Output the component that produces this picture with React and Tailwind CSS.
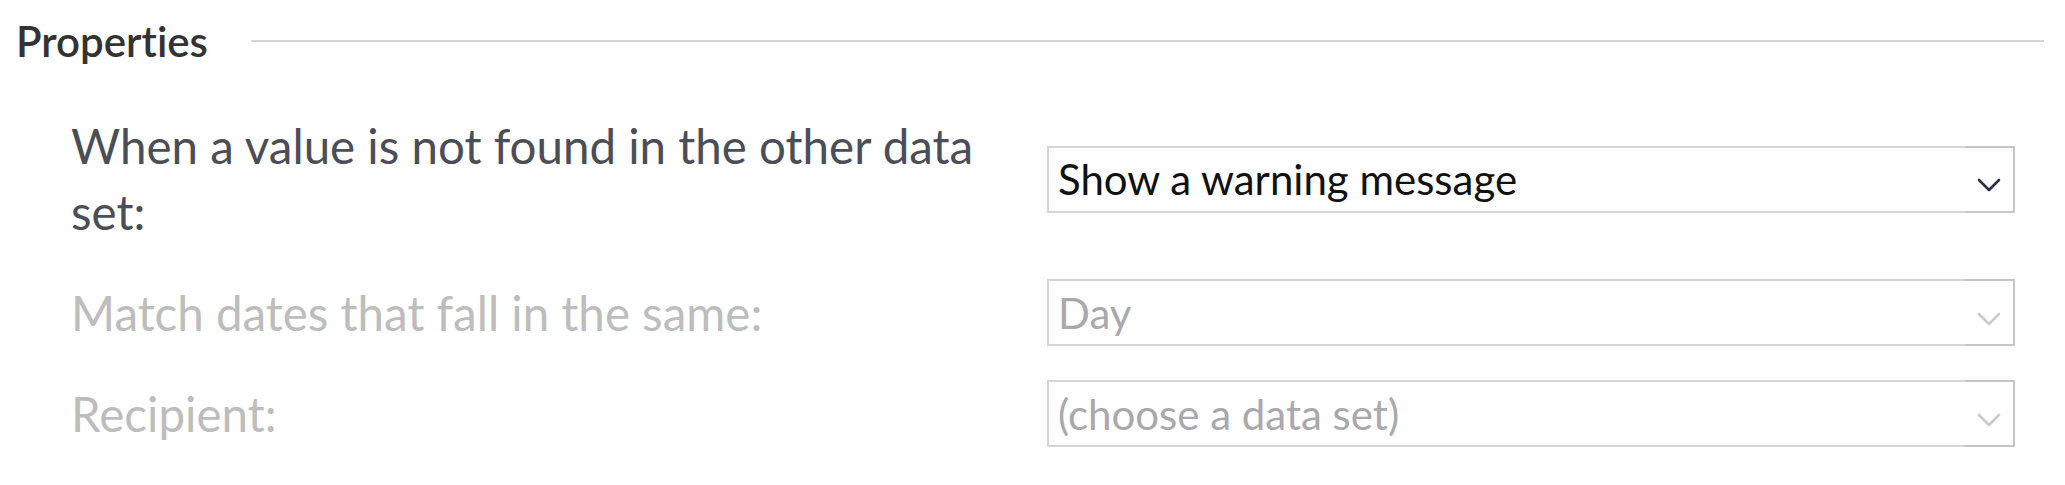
import React from "react";

function Chevron({ color }) {
  return (
    <svg width="24" height="14" viewBox="0 0 24 14" fill="none">
      <path d="M2 2 L12 12 L22 2" stroke={color} strokeWidth="2.6" strokeLinecap="round" strokeLinejoin="round" />
    </svg>
  );
}

function Select({ value, disabled }) {
  return (
    <div className="flex h-[67px] w-[968px] shrink-0">
      <div className="flex flex-1 items-center border-y-2 border-l-2 border-[#d4d5d9] pl-[9px]">
        <span className={"text-[42px] leading-none " + (disabled ? "text-[#a9a9ad]" : "text-[#111111]")}>{value}</span>
      </div>
      <div className="flex w-[50px] items-center justify-center border-y-2 border-r-2 border-[#c6c6c6] pt-[12px]">
        <Chevron color={disabled ? "#c9cbd0" : "#283043"} />
      </div>
    </div>
  );
}

function Row({ label, value, disabled, labelDisabled }) {
  return (
    <div className="flex items-center">
      <div className={"w-[976px] shrink-0 pr-[40px] text-[47.5px] leading-[66px] " + (labelDisabled ? "text-[#bdbdbd]" : "text-[#4b4e56]")}>
        {label}
      </div>
      <Select value={value} disabled={disabled} />
    </div>
  );
}

export default function App() {
  return (
    <div className="w-[2065px] h-[485px] bg-white [font-variant-ligatures:none]" style={{ fontFamily: "Lato, 'Liberation Sans', sans-serif" }}>
      <div className="flex items-center pl-[16px] pr-[21px] pt-[18px]">
        <span className="text-[42px] font-semibold leading-[46px] text-[#333333]">Properties</span>
        <div className="ml-[43px] h-[2px] flex-1 bg-[#d6d6d6]" />
      </div>
      <div className="mt-[49px] flex flex-col gap-[34px] pl-[71px]">
        <Row label="When a value is not found in the other data set:" value="Show a warning message" />
        <Row label="Match dates that fall in the same:" value="Day" disabled labelDisabled />
        <Row label="Recipient:" value="(choose a data set)" disabled labelDisabled />
      </div>
    </div>
  );
}
